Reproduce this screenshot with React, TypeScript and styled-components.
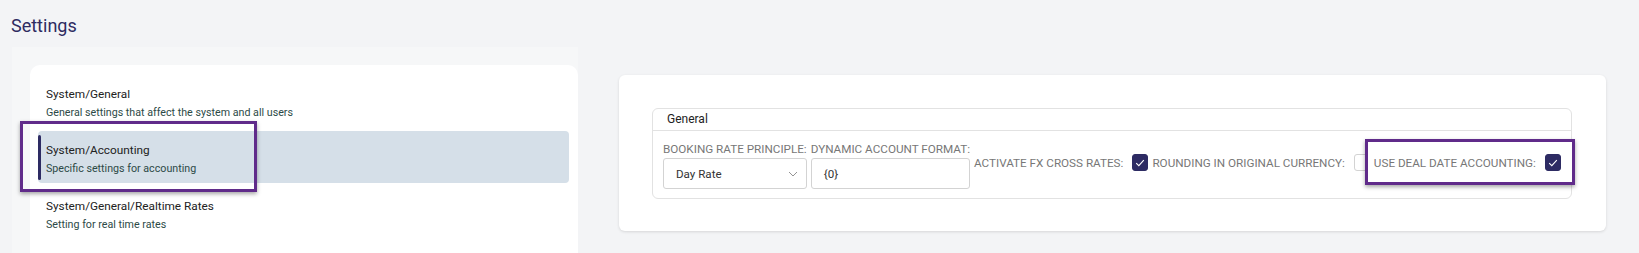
import React from "react";
import styled, { createGlobalStyle } from "styled-components";

const GlobalStyle = createGlobalStyle`
  * { box-sizing: border-box; }
  html, body {
    margin: 0;
    padding: 0;
    background: #f3f4f6;
    font-family: Roboto, "Liberation Sans", Arial, sans-serif;
  }
`;

const Page = styled.div`
  min-height: 253px;
  overflow: hidden;
  background: #f3f4f6;
`;

const PageTitle = styled.h1`
  margin: 0;
  padding: 15px 0 0 11px;
  height: 47px;
  font-size: 18px;
  font-weight: 400;
  color: #2e2b61;
`;

const Body = styled.div`
  display: flex;
  align-items: flex-start;
`;

const SidePanel = styled.div`
  margin-left: 12px;
  width: 566px;
  padding: 18px 0 0 18px;
  background: #f6f7f8;
`;

const SideCard = styled.div`
  background: #fff;
  border-radius: 10px;
  padding: 10px 9px 20px 8px;
  min-height: 200px;
  display: flex;
  flex-direction: column;
  gap: 4px;
`;

const NavItem = styled.div<{ $active?: boolean }>`
  position: relative;
  height: 52px;
  padding: 9px 0 0 8px;
  border-radius: 4px;
  background: ${(p) => (p.$active ? "#d5dfe8" : "transparent")};

  &::before {
    content: "";
    display: ${(p) => (p.$active ? "block" : "none")};
    position: absolute;
    left: 0;
    top: 4px;
    bottom: 3px;
    width: 3px;
    border-radius: 2px;
    background: #2d2b63;
  }
`;

const NavTitle = styled.div`
  font-size: 11.8px;
  line-height: 20px;
  color: #222;
`;

const NavDesc = styled.div`
  font-size: 10.7px;
  line-height: 18px;
  color: #2d4a47;
`;

const Highlight = styled.div<{ $top: number; $left: number; $width: number; $bottom: number }>`
  position: absolute;
  top: ${(p) => p.$top}px;
  left: ${(p) => p.$left}px;
  width: ${(p) => p.$width}px;
  bottom: ${(p) => p.$bottom}px;
  border: 3px solid #602b8a;
  box-shadow: 0 2px 4px rgba(0, 0, 0, 0.35);
  pointer-events: none;
`;

const MainCard = styled.div`
  margin: 28px 0 0 41px;
  width: 987px;
  background: #fff;
  border-radius: 6px;
  box-shadow: 0 1px 3px rgba(0, 0, 0, 0.12);
  padding: 33px 34px 32px 33px;
`;

const FieldSet = styled.div`
  border: 1px solid #e2e2e2;
  border-radius: 6px;
`;

const FieldSetHeader = styled.div`
  height: 22px;
  padding-left: 14px;
  font-size: 12px;
  line-height: 21px;
  color: #222;
  border-bottom: 1px solid #e2e2e2;
`;

const FieldRow = styled.div`
  display: flex;
  align-items: center;
  gap: 4px;
  padding: 11px 10px 9px 10px;
`;

const StackField = styled.div`
  display: inline-flex;
  flex-direction: column;
  gap: 2px;
`;

const InlineField = styled.div<{ $marked?: boolean }>`
  position: relative;
  display: flex;
  align-items: center;
  gap: 9px;
  margin-top: -6px;
  z-index: ${(p) => (p.$marked ? 1 : 0)};
  ${(p) =>
    p.$marked &&
    `
    &::before {
      content: "";
      position: absolute;
      top: -15px;
      bottom: -14px;
      left: -9px;
      right: -14px;
      background: #fff;
      border: 3px solid #602b8a;
      box-shadow: 0 2px 4px rgba(0, 0, 0, 0.35);
      z-index: -1;
    }
  `}
`;

const FieldLabel = styled.span`
  font-size: 11.7px;
  line-height: 14px;
  color: #777;
  white-space: nowrap;
  text-transform: uppercase;
`;

const SelectBox = styled.div`
  display: flex;
  align-items: center;
  justify-content: space-between;
  height: 31px;
  padding: 0 8px 0 12px;
  border: 1px solid #d3d3d3;
  border-radius: 3px;
  font-size: 11.6px;
  color: #333;
`;

const TextBox = styled.div`
  display: flex;
  align-items: center;
  height: 31px;
  padding-left: 12px;
  border: 1px solid #d3d3d3;
  border-radius: 3px;
  font-size: 11.6px;
  color: #333;
`;

const Check = styled.span<{ $checked?: boolean }>`
  display: inline-flex;
  align-items: center;
  justify-content: center;
  width: 16px;
  height: 17px;
  border-radius: 3px;
  background: ${(p) => (p.$checked ? "#2d2b63" : "#fff")};
  border: 1px solid ${(p) => (p.$checked ? "#2d2b63" : "#d3d3d3")};
`;

const CheckMark = () => (
  <svg width="10" height="8" viewBox="0 0 10 8">
    <path d="M1.2 4.2 L3.8 6.6 L8.8 1.2" fill="none" stroke="#fff" strokeWidth="1.1" />
  </svg>
);

const Chevron = () => (
  <svg width="10" height="6" viewBox="0 0 10 6">
    <path d="M1 1 L5 5 L9 1" fill="none" stroke="#888" strokeWidth="0.9" />
  </svg>
);

const navItems = [
  { title: "System/General", desc: "General settings that affect the system and all users" },
  { title: "System/Accounting", desc: "Specific settings for accounting", active: true },
  { title: "System/General/Realtime Rates", desc: "Setting for real time rates" },
];

export default function App() {
  return (
    <Page>
      <GlobalStyle />
      <PageTitle>Settings</PageTitle>
      <Body>
        <SidePanel>
          <SideCard>
            {navItems.map((item) => (
              <NavItem key={item.title} $active={item.active}>
                <NavTitle>{item.title}</NavTitle>
                <NavDesc>{item.desc}</NavDesc>
                {item.active && <Highlight $top={-10} $left={-18} $width={237} $bottom={-9} />}
              </NavItem>
            ))}
          </SideCard>
        </SidePanel>
        <MainCard>
          <FieldSet>
            <FieldSetHeader>General</FieldSetHeader>
            <FieldRow>
              <StackField>
                <FieldLabel>Booking Rate Principle:</FieldLabel>
                <SelectBox>
                  <span>Day Rate</span>
                  <Chevron />
                </SelectBox>
              </StackField>
              <StackField>
                <FieldLabel>Dynamic Account Format:</FieldLabel>
                <TextBox>{"{0}"}</TextBox>
              </StackField>
              <InlineField>
                <FieldLabel>Activate FX Cross Rates:</FieldLabel>
                <Check $checked>
                  <CheckMark />
                </Check>
              </InlineField>
              <InlineField>
                <FieldLabel>Rounding in Original Currency:</FieldLabel>
                <Check />
              </InlineField>
              <InlineField $marked>
                <FieldLabel>Use Deal Date Accounting:</FieldLabel>
                <Check $checked>
                  <CheckMark />
                </Check>
              </InlineField>
            </FieldRow>
          </FieldSet>
        </MainCard>
      </Body>
    </Page>
  );
}
